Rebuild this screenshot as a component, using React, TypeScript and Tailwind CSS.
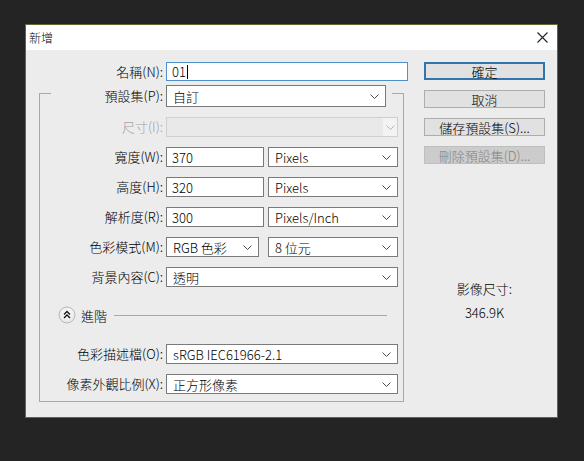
import React from "react";

const font = { fontFamily: '"Noto Sans CJK TC", "Noto Sans", sans-serif' };

function Chevron(props: { disabled?: boolean }) {
    return <svg width="9" height="5" viewBox="0 0 9 5" className="shrink-0">
        <polyline points="0.5,0.5 4.5,4.5 8.5,0.5" fill="none" stroke={props.disabled ? '#b4b4b4' : '#4a4a4a'} strokeWidth="1" />
    </svg>
}

function Select(props: { value: string, className: string }) {
    return <div className={`flex items-center justify-between bg-white border border-[#7a7a7a] pl-[6px] pr-[6px] ${props.className}`}>
        <span className="leading-none">{props.value}</span>
        <Chevron />
    </div>
}

function Input(props: { value: string, className: string }) {
    return <div className={`flex items-center bg-white border border-[#7a7a7a] pl-[5px] ${props.className}`}>
        <span className="leading-none">{props.value}</span>
    </div>
}

function Row(props: { label: string, disabled?: boolean, children: React.ReactNode }) {
    return <div className="flex h-[20px] items-stretch">
        <div className={`w-[123px] flex items-center justify-end ${props.disabled ? 'text-[#a3a3a3]' : 'text-black'}`}>{props.label}</div>
        <div className="ml-[3px] flex">{props.children}</div>
    </div>
}

function Button(props: { label: string, primary?: boolean, disabled?: boolean }) {
    let cls = 'bg-[#e1e1e1] border border-[#adadad] text-black';
    if (props.primary) cls = 'bg-[#e1e1e1] border-2 border-[#3274ab] text-black';
    if (props.disabled) cls = 'bg-[#cccccc] border border-[#bfbfbf] text-[#838383]';
    return <div className={`h-[18px] w-[121px] flex items-center justify-center leading-none ${cls}`}>{props.label}</div>
}

function AdvancedIcon() {
    return <svg width="18" height="18" viewBox="0 0 18 18" className="shrink-0">
        <defs>
            <radialGradient id="g" cx="50%" cy="40%" r="60%">
                <stop offset="0%" stopColor="#ffffff" />
                <stop offset="100%" stopColor="#e4e4e4" />
            </radialGradient>
        </defs>
        <circle cx="9" cy="9" r="8" fill="url(#g)" stroke="#b9b9b9" strokeWidth="1" />
        <polyline points="6,8.5 9,5.5 12,8.5" fill="none" stroke="#111" strokeWidth="1.4" />
        <polyline points="6,12 9,9 12,12" fill="none" stroke="#111" strokeWidth="1.4" />
    </svg>
}

export default function App() {
    return <div className="min-h-screen bg-[#242424] pl-[25px] pt-[24px] text-[13px] font-light" style={font}>
        <div className="w-[533px] h-[394px] border border-[#5d6c33] bg-[#ececec] flex flex-col">
            {/* title bar */}
            <div className="h-[25px] bg-white flex items-center justify-between pl-[3px] pr-[9px]">
                <span className="text-[12px] leading-none text-black">新增</span>
                <svg width="11" height="11" viewBox="0 0 11 11">
                    <path d="M0.5 0.5 L10.5 10.5 M10.5 0.5 L0.5 10.5" stroke="#222" strokeWidth="1.1" />
                </svg>
            </div>

            <div className="flex pt-[12px]">
                {/* form column */}
                <div className="w-[383px] flex flex-col">
                    <div className="flex h-[19px] items-stretch">
                        <div className="w-[137px] flex items-center justify-end">名稱(N):</div>
                        <div className="ml-[3px] w-[242px] bg-white border border-[#4f8fca] flex items-center pl-[5px]">
                            <span className="leading-none">01</span>
                            <span className="w-px h-[14px] bg-black ml-[1px]" />
                        </div>
                    </div>

                    <div className="ml-[13px] mt-[4px] w-[365px] flex flex-col">
                        {/* group header on the top border */}
                        <div className="flex h-[22px] items-stretch">
                            <div className="w-[12px] mt-[8px] border-t border-l border-[#a9a9a9]" />
                            <div className="w-[112px] flex items-center justify-end">預設集(P):</div>
                            <Select value="自訂" className="ml-[3px] w-[220px]" />
                            <div className="flex-1 ml-[6px] mt-[8px] border-t border-r border-[#a9a9a9]" />
                        </div>

                        <div className="border-l border-r border-b border-[#a9a9a9] pt-[10px] pb-[7px] flex flex-col">
                            <div className="flex flex-col gap-[10px]">
                                <Row label="尺寸(I):" disabled>
                                    <div className="w-[232px] flex items-stretch bg-[#e9e9e9] border border-[#cfcfcf]">
                                        <div className="flex-1" />
                                        <div className="w-[14px] bg-[#f3f3f3] flex items-center justify-center">
                                            <Chevron disabled />
                                        </div>
                                    </div>
                                </Row>
                                <Row label="寬度(W):">
                                    <Input value="370" className="w-[98px]" />
                                    <Select value="Pixels" className="ml-[4px] w-[130px]" />
                                </Row>
                                <Row label="高度(H):">
                                    <Input value="320" className="w-[98px]" />
                                    <Select value="Pixels" className="ml-[4px] w-[130px]" />
                                </Row>
                                <Row label="解析度(R):">
                                    <Input value="300" className="w-[98px]" />
                                    <Select value="Pixels/Inch" className="ml-[4px] w-[130px]" />
                                </Row>
                                <Row label="色彩模式(M):">
                                    <Select value="RGB 色彩" className="w-[93px]" />
                                    <Select value="8 位元" className="ml-[9px] w-[130px]" />
                                </Row>
                                <Row label="背景內容(C):">
                                    <Select value="透明" className="w-[232px]" />
                                </Row>
                            </div>

                            <div className="mt-[19px] h-[18px] flex items-center pl-[18px] pr-[16px]">
                                <AdvancedIcon />
                                <span className="ml-[5px] leading-none">進階</span>
                                <div className="flex-1 ml-[7px] h-px bg-[#a9a9a9]" />
                            </div>

                            <div className="mt-[20px] flex flex-col gap-[10px]">
                                <Row label="色彩描述檔(O):">
                                    <Select value="sRGB IEC61966-2.1" className="w-[232px]" />
                                </Row>
                                <Row label="像素外觀比例(X):">
                                    <Select value="正方形像素" className="w-[232px]" />
                                </Row>
                            </div>
                        </div>
                    </div>
                </div>

                {/* button column */}
                <div className="ml-[15px] w-[121px] flex flex-col">
                    <div className="flex flex-col gap-[10px]">
                        <Button label="確定" primary />
                        <Button label="取消" />
                        <Button label="儲存預設集(S)..." />
                        <Button label="刪除預設集(D)..." disabled />
                    </div>
                    <div className="mt-[117px] text-center leading-[16px]">影像尺寸:</div>
                    <div className="mt-[8px] text-center leading-[16px]">346.9K</div>
                </div>
            </div>
        </div>
    </div>
}
